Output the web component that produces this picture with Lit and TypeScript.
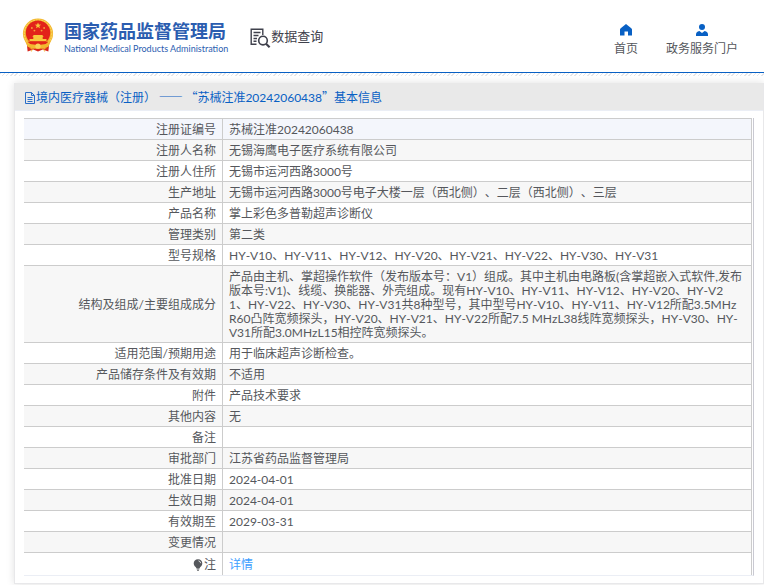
import { LitElement, html, css, svg } from "lit";
import { customElement, property } from "lit/decorators.js";

interface Field {
  label: string;
  value: string;
  link?: boolean;
}

const FIELDS: Field[] = [
  { label: "注册证编号", value: "苏械注准20242060438" },
  { label: "注册人名称", value: "无锡海鹰电子医疗系统有限公司" },
  { label: "注册人住所", value: "无锡市运河西路3000号" },
  { label: "生产地址", value: "无锡市运河西路3000号电子大楼一层（西北侧）、二层（西北侧）、三层" },
  { label: "产品名称", value: "掌上彩色多普勒超声诊断仪" },
  { label: "管理类别", value: "第二类" },
  { label: "型号规格", value: "HY-V10、HY-V11、HY-V12、HY-V20、HY-V21、HY-V22、HY-V30、HY-V31" },
  {
    label: "结构及组成/主要组成成分",
    value: [
      "产品由主机、掌超操作软件（发布版本号：V1）组成。其中主机由电路板(含掌超嵌入式软件,发布",
      "版本号:V1)、线缆、换能器、外壳组成。现有HY-V10、HY-V11、HY-V12、HY-V20、HY-V2",
      "1、HY-V22、HY-V30、HY-V31共8种型号，其中型号HY-V10、HY-V11、HY-V12所配3.5MHz",
      "R60凸阵宽频探头，HY-V20、HY-V21、HY-V22所配7.5 MHzL38线阵宽频探头，HY-V30、HY-",
      "V31所配3.0MHzL15相控阵宽频探头。",
    ].join("\n"),
  },
  { label: "适用范围/预期用途", value: "用于临床超声诊断检查。" },
  { label: "产品储存条件及有效期", value: "不适用" },
  { label: "附件", value: "产品技术要求" },
  { label: "其他内容", value: "无" },
  { label: "备注", value: "" },
  { label: "审批部门", value: "江苏省药品监督管理局" },
  { label: "批准日期", value: "2024-04-01" },
  { label: "生效日期", value: "2024-04-01" },
  { label: "有效期至", value: "2029-03-31" },
  { label: "变更情况", value: "" },
  { label: "注", value: "详情", link: true },
];

const emblem = svg`<svg width="32" height="35" viewBox="0 0 34 36" aria-hidden="true">
  <path d="M5 26L29 26 28 35 22 33 17 35 12 33 6 35Z" fill="#d8271c"/>
  <circle cx="17" cy="16" r="16" fill="#f3b72f"/>
  <circle cx="17" cy="16" r="14.6" fill="none" stroke="#f9d45a" stroke-width="1.2" stroke-dasharray="2 1"/>
  <circle cx="17" cy="15" r="13" fill="#e2231a"/>
  <path d="M17 4.2l.9 2.2 2.4.1-1.9 1.5.7 2.3-2.1-1.3-2.1 1.3.7-2.3-1.900-1.500 2.400-.1z" fill="#f8c83c"/>
  <g fill="#f4a13a"><circle cx="10.500" cy="10" r="1"/><circle cx="23.500" cy="10" r="1"/><circle cx="13.200" cy="12.800" r="1"/><circle cx="20.800" cy="12.800" r="1"/></g>
  <path d="M12.500 17.500h9l1.500 1.800h-12zM12 19.300h10v2.400h-10zM8 21.700h18v2.300H8z" fill="#f8c83c"/>
  <path d="M6 24.600h22l-3 3H9z" fill="#e2231a"/>
  <path d="M3 23c4 4 8 5 11 5h6c3 0 7-1 11-5l-3 7-6 2-5-1-5 1-6-2z" fill="#f3b72f"/>
  <circle cx="17" cy="29.300" r="2.800" fill="#f9d45a"/>
  <path d="M8 31l3 1-1 3M26 31l-3 1 1 3" stroke="#f3b72f" fill="none"/>
</svg>`;

const searchDoc = svg`<svg width="21" height="20" viewBox="0 0 21 20" fill="none" stroke="#3f414c" stroke-width="1.4" aria-hidden="true">
  <path d="M6.500 16.300H1.200V1.200H12.800V7"/>
  <path d="M3.500 4.500h7M3.500 7.500h5M3.500 10.500h3.500M3.500 13.300h3"/>
  <circle cx="13" cy="12.600" r="4.300" stroke-width="1.600"/>
  <path d="M16 15.800l3.600 3.400" stroke-width="2.200"/>
</svg>`;

const house = svg`<svg width="12" height="12" viewBox="0 0 12 12" fill="#0860c4" aria-hidden="true">
  <path d="M6 0L11.300 4.200Q12 4.900 12 5.600V11.500H8V7.600H4.500V11.500H0V5.600Q0 4.900.7 4.200Z"/>
</svg>`;

const person = svg`<svg width="12" height="12" viewBox="0 0 12 12" fill="#0860c4" aria-hidden="true">
  <circle cx="6" cy="3" r="3"/>
  <path d="M0 12V10.500Q0 7.600 3.400 7L6 8.900 8.600 7Q12 7.600 12 10.500V12Z"/>
</svg>`;

const page = svg`<svg width="12" height="12" viewBox="0 0 12 12" fill="none" stroke="#2a6ec8" aria-hidden="true">
  <path d="M1.500.5H7.500L10.500 3.500V11.500H1.500Z"/>
  <path d="M7.500.5V3.500H10.500M3.500 5.500H8.500M3.500 7.500H8.500M3.500 9.500H8.500"/>
</svg>`;

const bulb = svg`<svg width="10" height="12" viewBox="0 0 10 12" aria-hidden="true">
  <path d="M5 .3C7.700.3 9.300 2.200 9.300 4.400 9.300 6.700 7.300 7.600 6.700 9H3.300C2.700 7.600.7 6.700.7 4.400.7 2.200 2.300.3 5 .3Z" fill="#55575c"/>
  <path d="M3.500 9.800h3M4 11.200h2" stroke="#55575c"/>
  <path d="M5.500 1.800Q7.500 2.200 7.700 4.200" stroke="#fff" stroke-width=".8" fill="none"/>
</svg>`;

@customElement("site-header")
export class SiteHeader extends LitElement {
  static styles = css`
    :host { display: block; }
    .bar {
      display: flex;
      align-items: flex-start;
      height: 72px;
      padding: 0 26px 0 22px;
      border-bottom: 1px solid #0860c4;
      background: #fff;
    }
    .hatch {
      height: 3px;
      background: repeating-linear-gradient(135deg, #e6e6e8 0 1px, #fff 1px 3px);
    }
    .brand { display: flex; gap: 10px; padding-top: 18px; color: #2b5db0; text-decoration: none; }
    .names { display: flex; flex-direction: column; padding-top: 2px; white-space: nowrap; }
    .zh { font-size: 18px; line-height: 22px; font-weight: 700; }
    .en { font-size: 9px; line-height: 14px; font-kerning: normal; }
    .query {
      display: flex;
      align-items: flex-end;
      margin: 24px auto 0 22px;
      font-size: 13px;
      line-height: 24px;
      color: #3f414c;
      text-decoration: none;
      white-space: nowrap;
    }
    .nav { display: flex; gap: 28px; padding-top: 24px; }
    .item {
      display: flex;
      flex-direction: column;
      align-items: center;
      gap: 4px;
      line-height: 18px;
      color: #55575c;
      text-decoration: none;
      white-space: nowrap;
    }
    svg { display: block; flex: none; }
  `;

  render() {
    return html`
      <header class="bar">
        <a class="brand" href="#">
          ${emblem}
          <span class="names">
            <span class="zh">国家药品监督管理局</span>
            <span class="en">National Medical Products Administration</span>
          </span>
        </a>
        <a class="query" href="#">${searchDoc}<span>数据查询</span></a>
        <nav class="nav">
          <a class="item" href="#">${house}<span>首页</span></a>
          <a class="item" href="#">${person}<span>政务服务门户</span></a>
        </nav>
      </header>
      <div class="hatch"></div>
    `;
  }
}

@customElement("record-panel")
export class RecordPanel extends LitElement {
  @property({ attribute: false }) fields: Field[] = [];

  static styles = css`
    :host {
      display: block;
      border: 1px solid #e8e8ea;
      border-top: 0;
      background: #fff;
      box-shadow: 0 0 8px rgba(0, 0, 0, 0.12);
    }
    .title {
      display: flex;
      align-items: center;
      margin: 0;
      padding: 2px 9px 0;
      height: 25px;
      border-bottom: 1px solid #ebeef5;
      background: #e9e9e9;
      color: #0860c4;
      font-size: 12px;
      line-height: 24px;
      font-weight: 400;
      white-space: pre;
    }
    .wide { font-family: "Noto Sans CJK SC", sans-serif; }
    .frame {
      margin: 7px 9px;
      padding-right: 1px;
      border-right: 1px solid #c9c9d2;
      border-bottom: 1px solid #ebeef5;
    }
    .table { width: 100%; border-spacing: 0; table-layout: fixed; }
    .label-col { width: 199px; }
    .label, .value {
      padding: 4px 6px 2px;
      border-top: 1px solid #ccc;
      border-right: 1px solid #ccc;
      line-height: 14px;
      height: 14px;
      font-weight: 400;
    }
    .label { text-align: right; }
    .value { text-align: left; white-space: pre-line; }
    .row:nth-child(even) { background: #f7f7f7; }
    .row:first-child { background: #f4f6fc; }
    .row:last-child .label, .row:last-child .value { height: 16px; }
    .note { display: inline-flex; align-items: center; gap: 1px; vertical-align: top; }
    .more { color: #409eff; text-decoration: none; }
    svg { display: block; flex: none; }
  `;

  render() {
    return html`
      <h1 class="title">${page}<span>境内医疗器械（注册）<span class="wide" lang="zh-CN"> —— “</span>苏械注准20242060438<span class="wide" lang="zh-CN">”</span>基本信息</span></h1>
      <div class="frame">
        <table class="table">
          <colgroup><col class="label-col" /><col /></colgroup>
          <tbody>
            ${this.fields.map(
              (f) => html`<tr class="row">
                <th class="label" scope="row">${f.link ? html`<span class="note">${bulb}${f.label}</span>` : f.label}</th>
                <td class="value">${f.link ? html`<a class="more" href="#">${f.value}</a>` : f.value}</td>
              </tr>`
            )}
          </tbody>
        </table>
      </div>
    `;
  }
}

@customElement("app-root")
export class AppRoot extends LitElement {
  static styles = css`
    :host {
      display: block;
      overflow: hidden;
      background: #fff;
      color: #55575c;
      font: 12px/14px Lato, "Noto Sans CJK SC", sans-serif;
      font-kerning: none;
      text-spacing-trim: space-all;
    }
    .panel { margin: 7px 0 1px 14px; }
  `;

  render() {
    return html`
      <site-header></site-header>
      <main><record-panel class="panel" .fields=${FIELDS}></record-panel></main>
    `;
  }
}
